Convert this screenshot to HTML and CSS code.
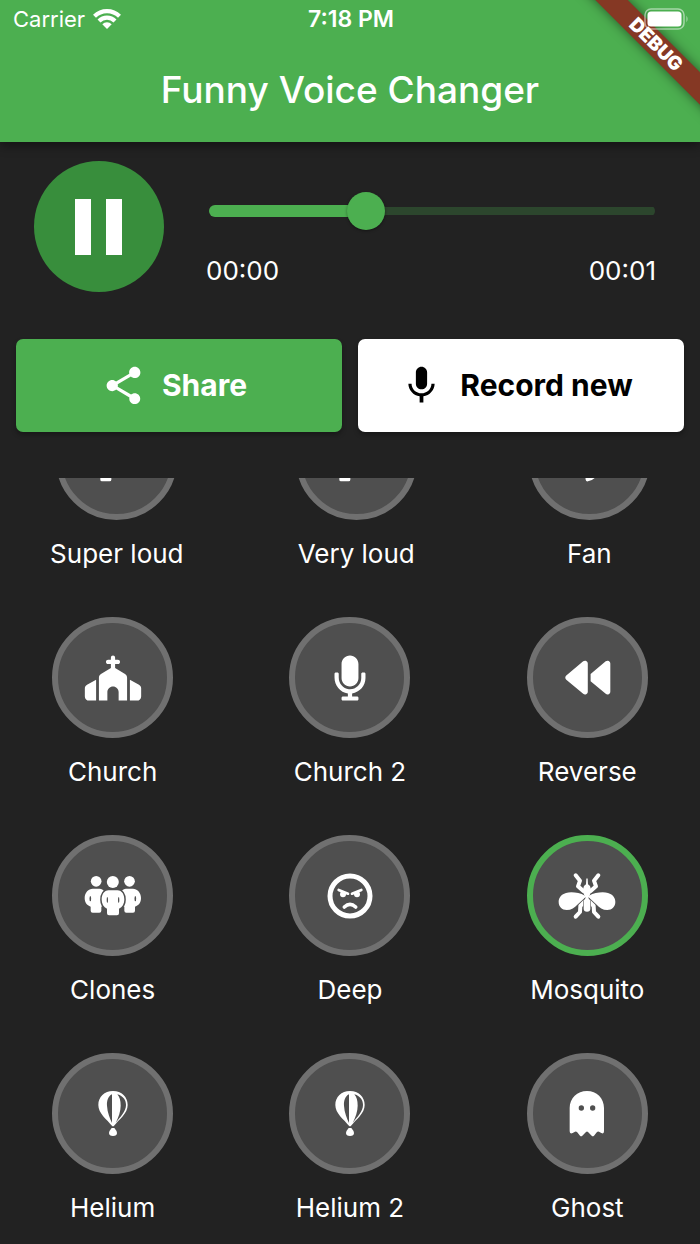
FILE: index.html
```html
<!DOCTYPE html>
<html lang="en">
<head>
<meta charset="utf-8">
<meta name="viewport" content="width=device-width, initial-scale=1">
<title>Funny Voice Changer</title>
<link rel="stylesheet" href="styles.css">
</head>
<body>
<div class="app">
  <header class="app-bar">
    <div class="status-bar">
      <span class="carrier">Carrier
        <svg class="wifi" viewBox="0 0 28 20" aria-hidden="true"><path d="M1.500 7.300a17.800 17.800 0 0 1 25 0M6 12a11.400 11.400 0 0 1 16 0" fill="none" stroke="#fff" stroke-width="4.200"/><path d="M9.300 15.300a6.700 6.700 0 0 1 9.400 0L14 20z" fill="#fff"/></svg>
      </span>
      <time class="clock">7:18 PM</time>
      <svg class="battery" viewBox="0 0 45 22" aria-label="Battery full"><rect x="1" y="1" width="39" height="20" rx="6" fill="none" stroke="#fff" stroke-opacity=".5" stroke-width="1.500"/><rect x="3.500" y="3.500" width="34" height="15" rx="3.500" fill="#fff"/><path d="M42.500 7.500q2 3.500 0 7z" fill="#fff" fill-opacity=".6"/></svg>
    </div>
    <h1 class="title">Funny Voice Changer</h1>
    <div class="ribbon-corner"><span class="ribbon">DEBUG</span></div>
  </header>

  <main>
    <section class="player" aria-label="Playback">
      <button class="pause" type="button" aria-label="Pause"><svg viewBox="0 0 48 56" aria-hidden="true"><path d="M0 0h16v56H0zM31 0h16v56H31z" fill="#fff"/></svg></button>
      <div class="progress">
        <input class="slider" type="range" min="0" max="1000" value="338" aria-label="Position">
        <div class="times"><span>00:00</span><span>00:01</span></div>
      </div>
    </section>

    <div class="actions">
      <button class="action share" type="button"><svg viewBox="0 0 24 24" aria-hidden="true"><path fill="currentColor" d="M18 16.080c-.76 0-1.440.3-1.960.77L8.910 12.700c.05-.23.09-.46.09-.7s-.04-.47-.09-.7l7.050-4.110c.54.5 1.250.81 2.040.81 1.660 0 3-1.340 3-3s-1.340-3-3-3-3 1.340-3 3c0 .24.04.47.09.7L8.040 9.810C7.500 9.310 6.790 9 6 9c-1.660 0-3 1.340-3 3s1.340 3 3 3c.79 0 1.500-.31 2.040-.81l7.120 4.160c-.05.21-.08.43-.08.65 0 1.610 1.310 2.920 2.920 2.920s2.920-1.310 2.920-2.920-1.310-2.920-2.920-2.920z"/></svg>Share</button>
      <button class="action record" type="button"><svg viewBox="0 0 24 24" aria-hidden="true"><path fill="currentColor" d="M12 14c1.660 0 2.990-1.340 2.990-3L15 5c0-1.660-1.340-3-3-3S9 3.340 9 5v6c0 1.660 1.340 3 3 3zm5.300-3c0 3-2.540 5.100-5.300 5.100S6.700 14 6.700 11H5c0 3.410 2.720 6.230 6 6.720V21h2v-3.280c3.280-.48 6-3.300 6-6.720h-1.700z"/></svg>Record new</button>
    </div>

    <section class="effects" aria-label="Voice effects">
      <div class="row row-scrolled">
        <button class="effect" type="button"><span class="disc"><svg viewBox="0 0 198 198" aria-hidden="true"><path fill="#fff" d="M32 78h52c24 0 46-12 58-24v94c-12-12-34-24-58-24h-2v34q0 5-5 5H54q-5 0-5-5v-34H32q-10 0-10-10V88q0-10 10-10z"/></svg></span>Super loud</button>
        <button class="effect" type="button"><span class="disc"><svg viewBox="0 0 198 198" aria-hidden="true"><path fill="#fff" d="M32 78h52c24 0 46-12 58-24v94c-12-12-34-24-58-24h-2v34q0 5-5 5H54q-5 0-5-5v-34H32q-10 0-10-10V88q0-10 10-10z"/></svg></span>Very loud</button>
        <button class="effect" type="button"><span class="disc"><svg viewBox="0 0 198 198" aria-hidden="true"><g fill="#fff"><path id="blade" d="M99 99q24 10 25 32 0 26-28 32-6 1-7-5l-3-28q-14 10-28 5 14-30 41-36z"/><use href="#blade" transform="rotate(90 99 99)"/><use href="#blade" transform="rotate(180 99 99)"/><use href="#blade" transform="rotate(270 99 99)"/></g></svg></span>Fan</button>
      </div>

      <div class="row">
        <button class="effect" type="button"><span class="disc"><svg viewBox="-55 -120 750 750" aria-hidden="true"><path fill="#fff" d="M344 24c0-13.300-10.700-24-24-24s-24 10.700-24 24V48H264c-13.300 0-24 10.700-24 24s10.700 24 24 24h32v46.400L183.300 210c-14.500 8.700-23.300 24.300-23.300 41.200V512h96V416c0-35.300 28.700-64 64-64s64 28.700 64 64v96h96V251.200c0-16.900-8.800-32.500-23.300-41.200L344 142.400V96h32c13.300 0 24-10.700 24-24s-10.700-24-24-24H344V24zM24.900 330.300C9.500 338.800 0 354.900 0 372.400V464c0 26.500 21.500 48 48 48h80V273.600L24.900 330.300zM592 512c26.500 0 48-21.500 48-48V372.400c0-17.500-9.500-33.600-24.900-42.100L512 273.600V512h80z"/></svg></span>Church</button>
        <button class="effect" type="button"><span class="disc"><svg viewBox="-199 -120 750 750" aria-hidden="true"><path fill="#fff" d="M176 352c53.020 0 96-42.980 96-96V96c0-53.020-42.980-96-96-96S80 42.980 80 96v160c0 53.020 42.980 96 96 96zm160-160h-16c-8.840 0-16 7.160-16 16v48c0 74.800-64.490 134.820-140.790 127.380C96.710 376.890 48 317.110 48 250.300V208c0-8.840-7.160-16-16-16H16c-8.840 0-16 7.160-16 16v40.160c0 89.640 63.970 169.550 152 181.690V464H96c-8.840 0-16 7.160-16 16v16c0 8.840 7.160 16 16 16h160c8.840 0 16-7.160 16-16v-16c0-8.840-7.160-16-16-16h-56v-33.770C285.710 418.470 352 344.900 352 256v-48c0-8.840-7.160-16-16-16z"/></svg></span>Church 2</button>
        <button class="effect" type="button"><span class="disc"><svg viewBox="-128 -114 750 750" aria-hidden="true"><path fill="#fff" d="M459.500 440.600c9.500 7.900 22.800 9.700 34.100 4.400s18.400-16.600 18.400-29V96c0-12.400-7.200-23.700-18.400-29s-24.500-3.600-34.100 4.400L288 214.300v83.400L459.500 440.600zM256 352V96c0-12.400-7.200-23.700-18.400-29s-24.500-3.600-34.100 4.400l-192 160C4.200 237.500 0 246.500 0 256s4.200 18.500 11.500 24.600l192 160c9.500 7.900 22.800 9.700 34.100 4.400s18.400-16.600 18.400-29V352z"/></svg></span>Reverse</button>
      </div>

      <div class="row">
        <button class="effect" type="button"><span class="disc"><svg viewBox="0 0 198 198" aria-hidden="true"><g fill="#fff"><g id="person"><circle cx="48.500" cy="55" r="16"/><path d="M38 77h21c11 0 19 11 19 28 0 13-6 23-14 26v12q0 6-6 6H38q-6 0-6-6v-12c-12-4-18-13-18-26 0-17 12-28 24-28z"/><ellipse cx="31" cy="107" rx="2.500" ry="8" fill="#4f4f4f"/></g><use href="#person" transform="matrix(-1 0 0 1 197 0)"/><circle cx="98.500" cy="57" r="18"/><path stroke="#4f4f4f" stroke-width="9" paint-order="stroke" d="M86 82h26c14 0 21 13 21 28 0 12-6 22-16 27v14q0 6-6 6H87q-6 0-6-6v-14c-10-5-16-15-16-27 0-15 7-28 21-28z"/></g><g fill="#4f4f4f"><ellipse cx="82" cy="111" rx="2" ry="9"/><ellipse cx="116" cy="111" rx="2" ry="9"/></g></svg></span>Clones</button>
        <button class="effect" type="button"><span class="disc"><svg viewBox="0 0 198 198" aria-hidden="true"><g fill="none" stroke="#fff" stroke-linecap="round"><circle cx="99" cy="99" r="60" stroke-width="15"/><path stroke-width="8" d="M65 81l28 11M133 81l-28 11"/><path stroke-width="11" d="M82 132q17-16 34 0"/></g><circle cx="78" cy="94" r="9" fill="#fff"/><circle cx="120" cy="94" r="9" fill="#fff"/></svg></span>Deep</button>
        <button class="effect selected" type="button" aria-pressed="true"><span class="disc"><svg viewBox="0 0 198 198" aria-hidden="true"><g id="half"><path fill="#fff" d="M93 98C75 88 50 86 36 90 20 95 14 106 14 117c0 14 10 24 24 24 14 0 24-7 32-16l25-23z"/><path fill="none" stroke="#fff" stroke-width="12" stroke-linecap="round" stroke-linejoin="round" d="M65 37l13 16-6 17 16 14M65 161l13-14 1-18 13-13"/></g><use href="#half" transform="matrix(-1 0 0 1 198 0)"/><path fill="#fff" stroke="#4f4f4f" stroke-width="3" paint-order="stroke" d="M99 99l10 14v24q0 9-10 9t-10-9v-24z"/><path fill="#fff" d="M97 47q2-2 4 0l1 17q8 4 8 12v15l-7 14h-8l-7-14V76q0-8 8-12z"/></svg></span>Mosquito</button>
      </div>

      <div class="row">
        <button class="effect" type="button"><span class="disc"><svg viewBox="0 0 198 198" aria-hidden="true"><g id="balloon"><path fill="#fff" d="M99 30c26 0 44 18 44 42 0 26-25 42-42 64h-4C80 114 55 98 55 72c0-24 18-42 44-42zM95 141h8q8 9 8 15 0 9-12 9t-12-9q0-6 8-15z"/><path fill="#4f4f4f" d="M96 40c-12 6-16 20-15 34 1 21 9 38 15 52zM112 40c20 6 26 20 26 32 0 20-18 36-31 54 9-18 15-36 15-52 0-16-3-26-10-34z"/></g></svg></span>Helium</button>
        <button class="effect" type="button"><span class="disc"><svg viewBox="0 0 198 198" aria-hidden="true"><use href="#balloon"/></svg></span>Helium 2</button>
        <button class="effect" type="button"><span class="disc"><svg viewBox="0 0 198 198" aria-hidden="true"><path fill="#fff" d="M47 81c0-29 23-51 52-51s51 22 51 51v70q0 9-8 5l-7-4q-3-2-6 1l-9 11q-4 3-7 0l-11-11q-3-3-6 0l-11 11q-4 3-7 0l-9-11q-3-3-6-1l-7 4q-9 4-9-5z"/><circle cx="82" cy="81" r="8" fill="#4f4f4f"/><circle cx="116" cy="81" r="8" fill="#4f4f4f"/></svg></span>Ghost</button>
      </div>
    </section>
  </main>
</div>
</body>
</html>
```

FILE: styles.css
```css
* { box-sizing: border-box; }

body {
  margin: 0;
  background: #222;
  color: #fff;
  font-family: Inter, "Liberation Sans", sans-serif;
  font-size: 26px;
  line-height: 32px;
}

button {
  border: 0;
  padding: 0;
  font: inherit;
  color: inherit;
  background: none;
  cursor: pointer;
}

svg { display: block; }

.app { overflow: hidden; }

.app-bar {
  position: relative;
  background: #4caf50;
  box-shadow: 0 4px 10px rgba(0, 0, 0, .4);
}

.status-bar {
  display: grid;
  grid-template-columns: 1fr auto 1fr;
  align-items: center;
  height: 38px;
  padding: 0 11px 0 13px;
  font-size: 22px;
  line-height: 28px;
}

.carrier {
  display: flex;
  align-items: center;
  gap: 8px;
}

.wifi { width: 28px; height: 20px; }

.clock { font-size: 23px; font-weight: 600; }

.battery {
  position: relative;
  z-index: 2;
  justify-self: end;
  width: 45px;
  height: 22px;
}

.title {
  margin: 0;
  padding: 28px 0;
  font-size: 37px;
  line-height: 48px;
  font-weight: 500;
  text-align: center;
}

.ribbon-corner {
  position: absolute;
  top: 0;
  right: 0;
  width: 142px;
  height: 142px;
  overflow: hidden;
}

.ribbon {
  position: absolute;
  top: 33px;
  right: -56px;
  width: 200px;
  background: #853824;
  box-shadow: 0 0 12px rgba(0, 0, 0, .5);
  font-size: 19px;
  line-height: 23px;
  font-weight: 900;
  text-align: center;
  transform: rotate(45deg);
}

.player {
  display: flex;
  align-items: flex-start;
  gap: 42px;
  padding: 19px 44px 47px 34px;
}

.pause {
  display: grid;
  place-items: center;
  flex: none;
  width: 130px;
  height: 131px;
  border-radius: 50%;
  background: #388e3c;
}

.pause svg { width: 48px; height: 56px; }

.progress { flex: 1; padding-top: 31px; }

.slider {
  -webkit-appearance: none;
  appearance: none;
  display: block;
  width: calc(100% - 4px);
  height: 38px;
  margin: 0 1px 0 3px;
  background: none;
}

.slider::-webkit-slider-runnable-track {
  height: 12px;
  border-radius: 6px;
  background:
    linear-gradient(#4caf50, #4caf50) left / 35% 12px no-repeat,
    linear-gradient(#2c462d, #2c462d) center / 100% 8px no-repeat;
}

.slider::-webkit-slider-thumb {
  -webkit-appearance: none;
  width: 38px;
  height: 38px;
  margin-top: -13px;
  border-radius: 50%;
  background: #4caf50;
  box-shadow: 0 1px 3px rgba(0, 0, 0, .4);
}

.times {
  display: flex;
  justify-content: space-between;
  margin-top: 25px;
}

.actions {
  display: grid;
  grid-template-columns: 1fr 1fr;
  gap: 16px;
  padding: 0 16px 46px;
}

.action {
  display: flex;
  align-items: center;
  justify-content: center;
  gap: 16px;
  height: 93px;
  padding: 0 10px 1px 0;
  border-radius: 7px;
  box-shadow: 0 3px 5px rgba(0, 0, 0, .3);
  font-size: 30px;
  font-weight: 700;
}

.action svg { width: 45px; height: 45px; }

.share { background: #4caf50; }

.record { background: #fff; color: #000; }

.effects {
  overflow: hidden;
  padding-bottom: 20px;
}

.row {
  display: flex;
  justify-content: space-around;
  margin: 0 -6px;
}

.row + .row { margin-top: 47px; }

.row-scrolled { margin-top: -79px; }

.effect {
  display: flex;
  flex-direction: column;
  align-items: center;
  gap: 18px;
  min-width: 121px;
}

.disc {
  display: grid;
  place-items: center;
  width: 121px;
  height: 121px;
  border: 6px solid #707070;
  border-radius: 50%;
  background: #4f4f4f;
}

.disc svg { width: 66px; height: 66px; }

.selected .disc { border-color: #4caf50; }
```
